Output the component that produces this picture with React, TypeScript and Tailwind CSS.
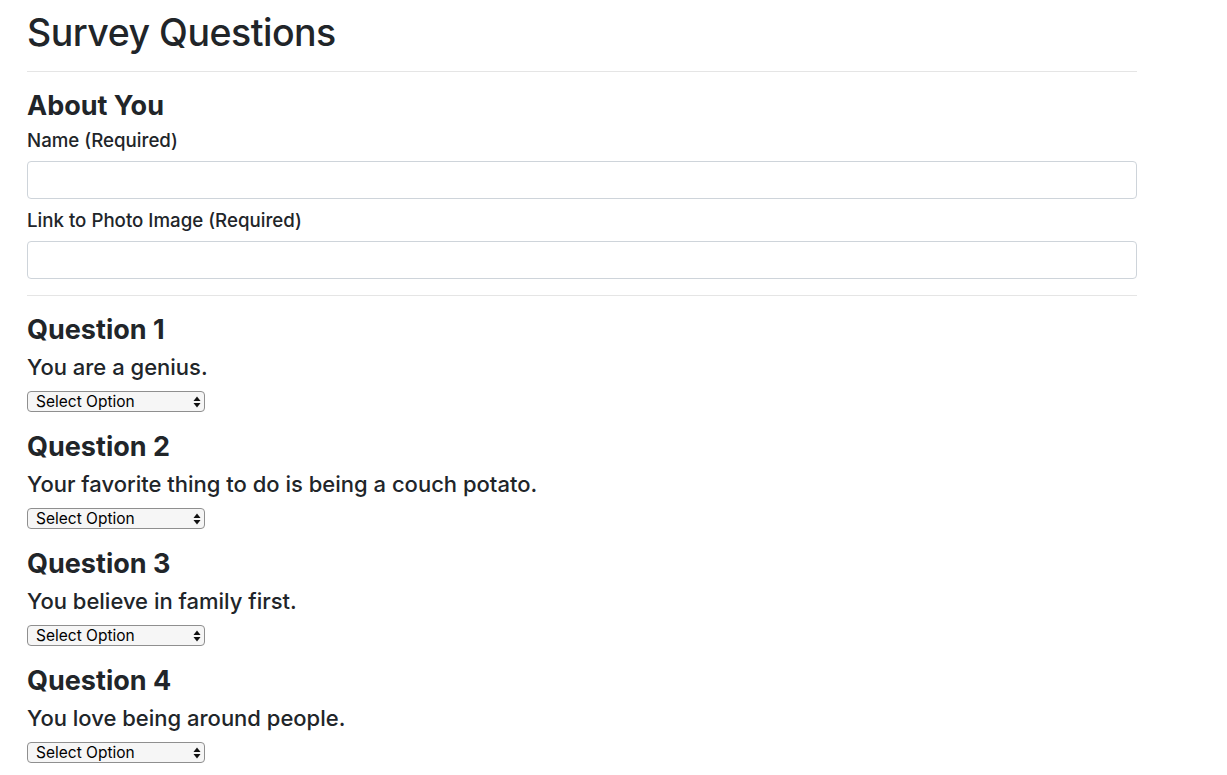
import React from "react";

//-------------------------Data-------------------------
const questions = [
  "You are a genius.",
  "Your favorite thing to do is being a couch potato.",
  "You believe in family first.",
  "You love being around people.",
];

const font = { fontFamily: "Inter, 'Noto Sans', Arial, sans-serif" };

//-------------------------Components-------------------------
function SelectBox() {
  return (
    <div className="relative w-[178px] h-[21px]">
      <select
        defaultValue=""
        className="block appearance-none w-full h-[21px] rounded-[4px] border border-[#8f8f8f] bg-[#f6f6f6] pl-[8px] text-[15.5px] leading-[19px] text-black outline-none"
        style={font}
      >
        <option value="">Select Option</option>
        <option value="1">1 (Strongly Disagree)</option>
        <option value="2">2</option>
        <option value="3">3</option>
        <option value="4">4</option>
        <option value="5">5 (Strongly Agree)</option>
      </select>
      <svg className="pointer-events-none absolute right-[4px] top-[5px]" width="8" height="12" viewBox="0 0 8 12">
        <path d="M4 0.5 L7.5 5 H0.5 Z" fill="#111" />
        <path d="M4 11.5 L7.5 7 H0.5 Z" fill="#111" />
      </svg>
    </div>
  );
}

export default function App() {
  return (
    <div className="min-h-screen bg-white text-[#212529]" style={font}>
      <div className="ml-[27px] w-[1110px] pb-4">
        <h1 className="pt-[9px] text-[37.5px] leading-[48px] font-medium tracking-[-0.5px]">Survey Questions</h1>
        <hr className="mt-[14px] border-t border-[#e5e5e5]" />

        <h3 className="mt-[17px] text-[27px] leading-[34px] font-bold">About You</h3>
        <label className="mt-[6px] block text-[18.7px] leading-[24px] font-medium">Name (Required)</label>
        <input type="text" className="mt-[8px] block w-full h-[38px] rounded-[4px] border border-[#ced4da] px-3" />
        <label className="mt-[10px] block text-[18.7px] leading-[24px] font-medium">Link to Photo Image (Required)</label>
        <input type="text" className="mt-[8px] block w-full h-[38px] rounded-[4px] border border-[#ced4da] px-3" />
        <hr className="mt-[16px] border-t border-[#e5e5e5]" />

        {questions.map((q, i) => (
          <div key={i} className={i === 0 ? "mt-[17px]" : "mt-[18px]"}>
            <h3 className="text-[27px] leading-[34px] font-bold">Question {i + 1}</h3>
            <h4 className="mt-[6px] text-[22px] leading-[28px] font-medium">{q}</h4>
            <div className="mt-[10px]">
              <SelectBox />
            </div>
          </div>
        ))}
      </div>
    </div>
  );
}
